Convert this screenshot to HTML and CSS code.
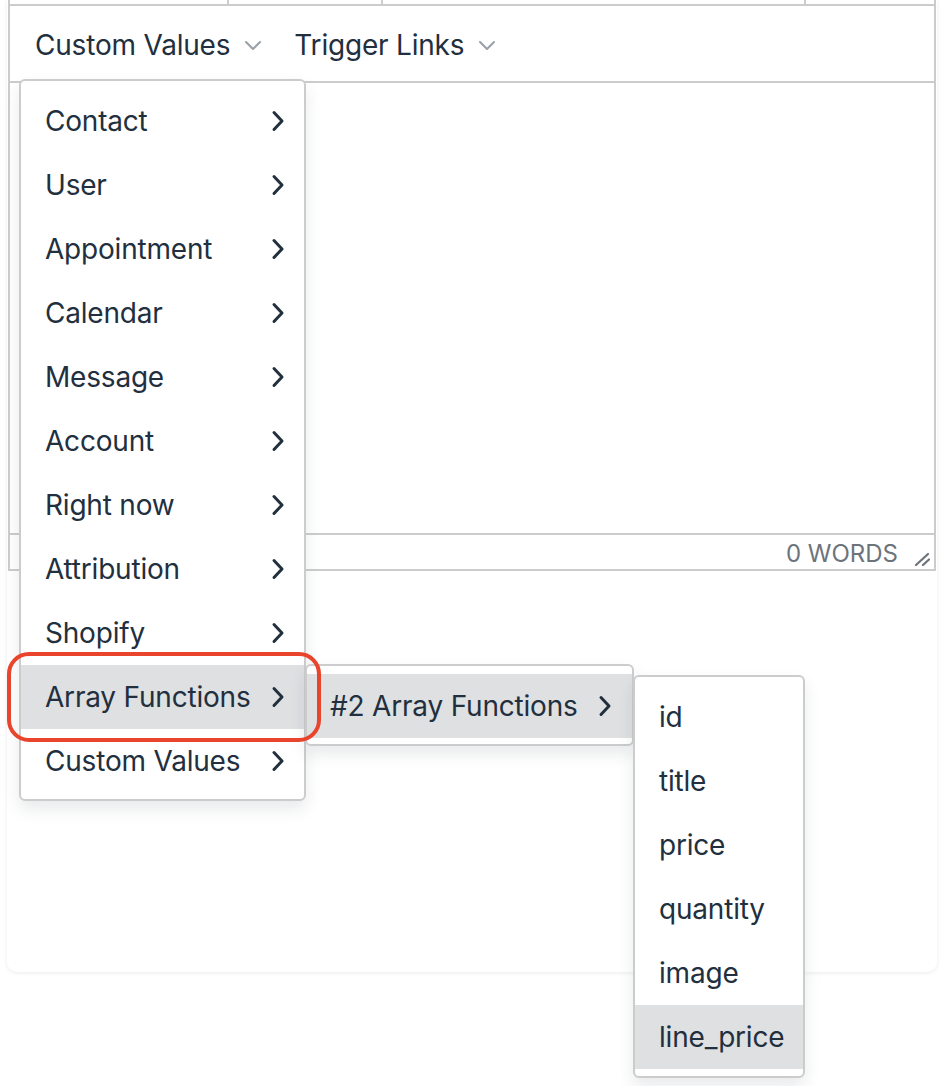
FILE: index.html
```html
<!DOCTYPE html>
<html>
<head>
  <title>Email Editor</title>
  <link rel="stylesheet" href="styles.css">
</head>
<body>
  <div class="card">
    <div class="editor">
      <div class="toolbar">
        <div class="tool-group g1"></div>
        <div class="tool-group g2"></div>
        <div class="tool-group g3"></div>
        <div class="tool-group g4"></div>
      </div>

      <div class="menubar">
        <div class="menu-btn">
          <span>Custom Values</span>
          <svg class="caret" width="18" height="11" viewBox="0 0 18 11"><polyline points="2,2 9,9 16,2"/></svg>
        </div>
        <div class="menu-btn">
          <span>Trigger Links</span>
          <svg class="caret" width="18" height="11" viewBox="0 0 18 11"><polyline points="2,2 9,9 16,2"/></svg>
        </div>
      </div>

      <div class="edit-area"></div>

      <div class="statusbar">
        <span class="word-count">0 Words</span>
        <svg class="resize" width="16" height="14" viewBox="0 0 16 14"><line x1="2" y1="13" x2="14" y2="2"/><line x1="9" y1="13" x2="15" y2="7.5"/></svg>
      </div>
    </div>
    <div class="card-body"></div>
  </div>

  <!-- dropdown: Custom Values -->
  <div class="menu menu-main">
    <div class="menu-item">Contact <svg class="chev" width="14" height="22" viewBox="0 0 14 22"><polyline points="3,2.5 11,11 3,19.5"/></svg></div>
    <div class="menu-item">User <svg class="chev" width="14" height="22" viewBox="0 0 14 22"><polyline points="3,2.5 11,11 3,19.5"/></svg></div>
    <div class="menu-item">Appointment <svg class="chev" width="14" height="22" viewBox="0 0 14 22"><polyline points="3,2.5 11,11 3,19.5"/></svg></div>
    <div class="menu-item">Calendar <svg class="chev" width="14" height="22" viewBox="0 0 14 22"><polyline points="3,2.5 11,11 3,19.5"/></svg></div>
    <div class="menu-item">Message <svg class="chev" width="14" height="22" viewBox="0 0 14 22"><polyline points="3,2.5 11,11 3,19.5"/></svg></div>
    <div class="menu-item">Account <svg class="chev" width="14" height="22" viewBox="0 0 14 22"><polyline points="3,2.5 11,11 3,19.5"/></svg></div>
    <div class="menu-item">Right now <svg class="chev" width="14" height="22" viewBox="0 0 14 22"><polyline points="3,2.5 11,11 3,19.5"/></svg></div>
    <div class="menu-item">Attribution <svg class="chev" width="14" height="22" viewBox="0 0 14 22"><polyline points="3,2.5 11,11 3,19.5"/></svg></div>
    <div class="menu-item">Shopify <svg class="chev" width="14" height="22" viewBox="0 0 14 22"><polyline points="3,2.5 11,11 3,19.5"/></svg></div>
    <div class="menu-item active">Array Functions <svg class="chev" width="14" height="22" viewBox="0 0 14 22"><polyline points="3,2.5 11,11 3,19.5"/></svg></div>
    <div class="menu-item">Custom Values <svg class="chev" width="14" height="22" viewBox="0 0 14 22"><polyline points="3,2.5 11,11 3,19.5"/></svg></div>
  </div>

  <div class="menu menu-sub">
    <div class="menu-item active">#2 Array Functions <svg class="chev" width="14" height="22" viewBox="0 0 14 22"><polyline points="3,2.5 11,11 3,19.5"/></svg></div>
  </div>

  <div class="menu menu-fields">
    <div class="menu-item">id</div>
    <div class="menu-item">title</div>
    <div class="menu-item">price</div>
    <div class="menu-item">quantity</div>
    <div class="menu-item">image</div>
    <div class="menu-item active">line_price</div>
  </div>

  <!-- annotation around the hovered item -->
  <div class="callout"></div>
</body>
</html>
```

FILE: styles.css
```css
body {
  margin: 0;
  background-color: #fff;
  font-family: Inter, "Noto Sans", sans-serif;
  color: #222f3e;
  position: relative;
  height: 1086px;
  overflow: hidden;
}

.card {
  margin-left: 7px;
  width: 930px;
  padding: 0 1px;
  box-sizing: border-box;
  background-color: #fff;
  border-radius: 0 0 10px 10px;
  box-shadow: 0px 1px 4px rgba(0, 0, 0, 0.08);
}

.editor {
  border: 2px solid #cccccc;
  border-top: none;
}

.toolbar {
  display: flex;
  height: 4px;
  border-bottom: 2px solid #cccccc;
}

.tool-group {
  border-right: 2px solid #cccccc;
}

.g1 { width: 217px; }
.g2 { width: 152px; }
.g3 { width: 421px; }
.g4 { flex: 1; border-right: none; }

.menubar {
  display: flex;
  align-items: center;
  gap: 8px;
  height: 77px;
  padding-left: 13px;
  padding-top: 2px;
  box-sizing: border-box;
  border-bottom: 2px solid #cccccc;
}

.menu-btn {
  display: flex;
  align-items: center;
  gap: 14px;
  padding: 0 12px;
  font-size: 28px;
  letter-spacing: -0.2px;
}

.caret {
  fill: none;
  stroke: #9aa0a7;
  stroke-width: 2;
  stroke-linecap: round;
  stroke-linejoin: round;
  margin-top: 1px;
}

.edit-area {
  height: 450px;
}

.statusbar {
  display: flex;
  align-items: center;
  justify-content: flex-end;
  height: 34px;
  border-top: 2px solid #cccccc;
  padding-right: 4px;
}

.word-count {
  font-size: 24px;
  text-transform: uppercase;
  color: #6d737b;
  margin-right: 16px;
  margin-top: 2px;
}

.resize {
  fill: none;
  stroke: #6d737b;
  stroke-width: 2.2;
  stroke-linecap: round;
  margin-top: 14px;
}

.card-body {
  height: 401px;
}

/* dropdown menus */
.menu {
  position: absolute;
  background-color: #fff;
  border: 2px solid #cccccc;
  border-radius: 6px;
  padding: 8px 0 6px;
  box-sizing: border-box;
  box-shadow: 0px 8px 16px rgba(34, 47, 62, 0.1);
}

.menu-main {
  left: 19px;
  top: 79px;
  width: 287px;
}

.menu-sub {
  left: 305px;
  top: 664px;
  width: 329px;
}

.menu-fields {
  left: 633px;
  top: 675px;
  width: 172px;
  padding-bottom: 7px;
}

.menu-item {
  display: flex;
  align-items: center;
  justify-content: space-between;
  height: 64px;
  padding: 0 19px 0 24px;
  font-size: 28px;
  letter-spacing: -0.2px;
  white-space: nowrap;
}

.menu-sub .menu-item {
  padding: 0 20px 0 23px;
}

.menu-item.active {
  background-color: #dee0e2;
}

.chev {
  fill: none;
  stroke: #222f3e;
  stroke-width: 3;
  stroke-linecap: round;
  stroke-linejoin: round;
}

.callout {
  position: absolute;
  left: 7px;
  top: 652px;
  width: 314px;
  height: 90px;
  box-sizing: border-box;
  border: 4px solid #e9452d;
  border-radius: 22px;
}
```
